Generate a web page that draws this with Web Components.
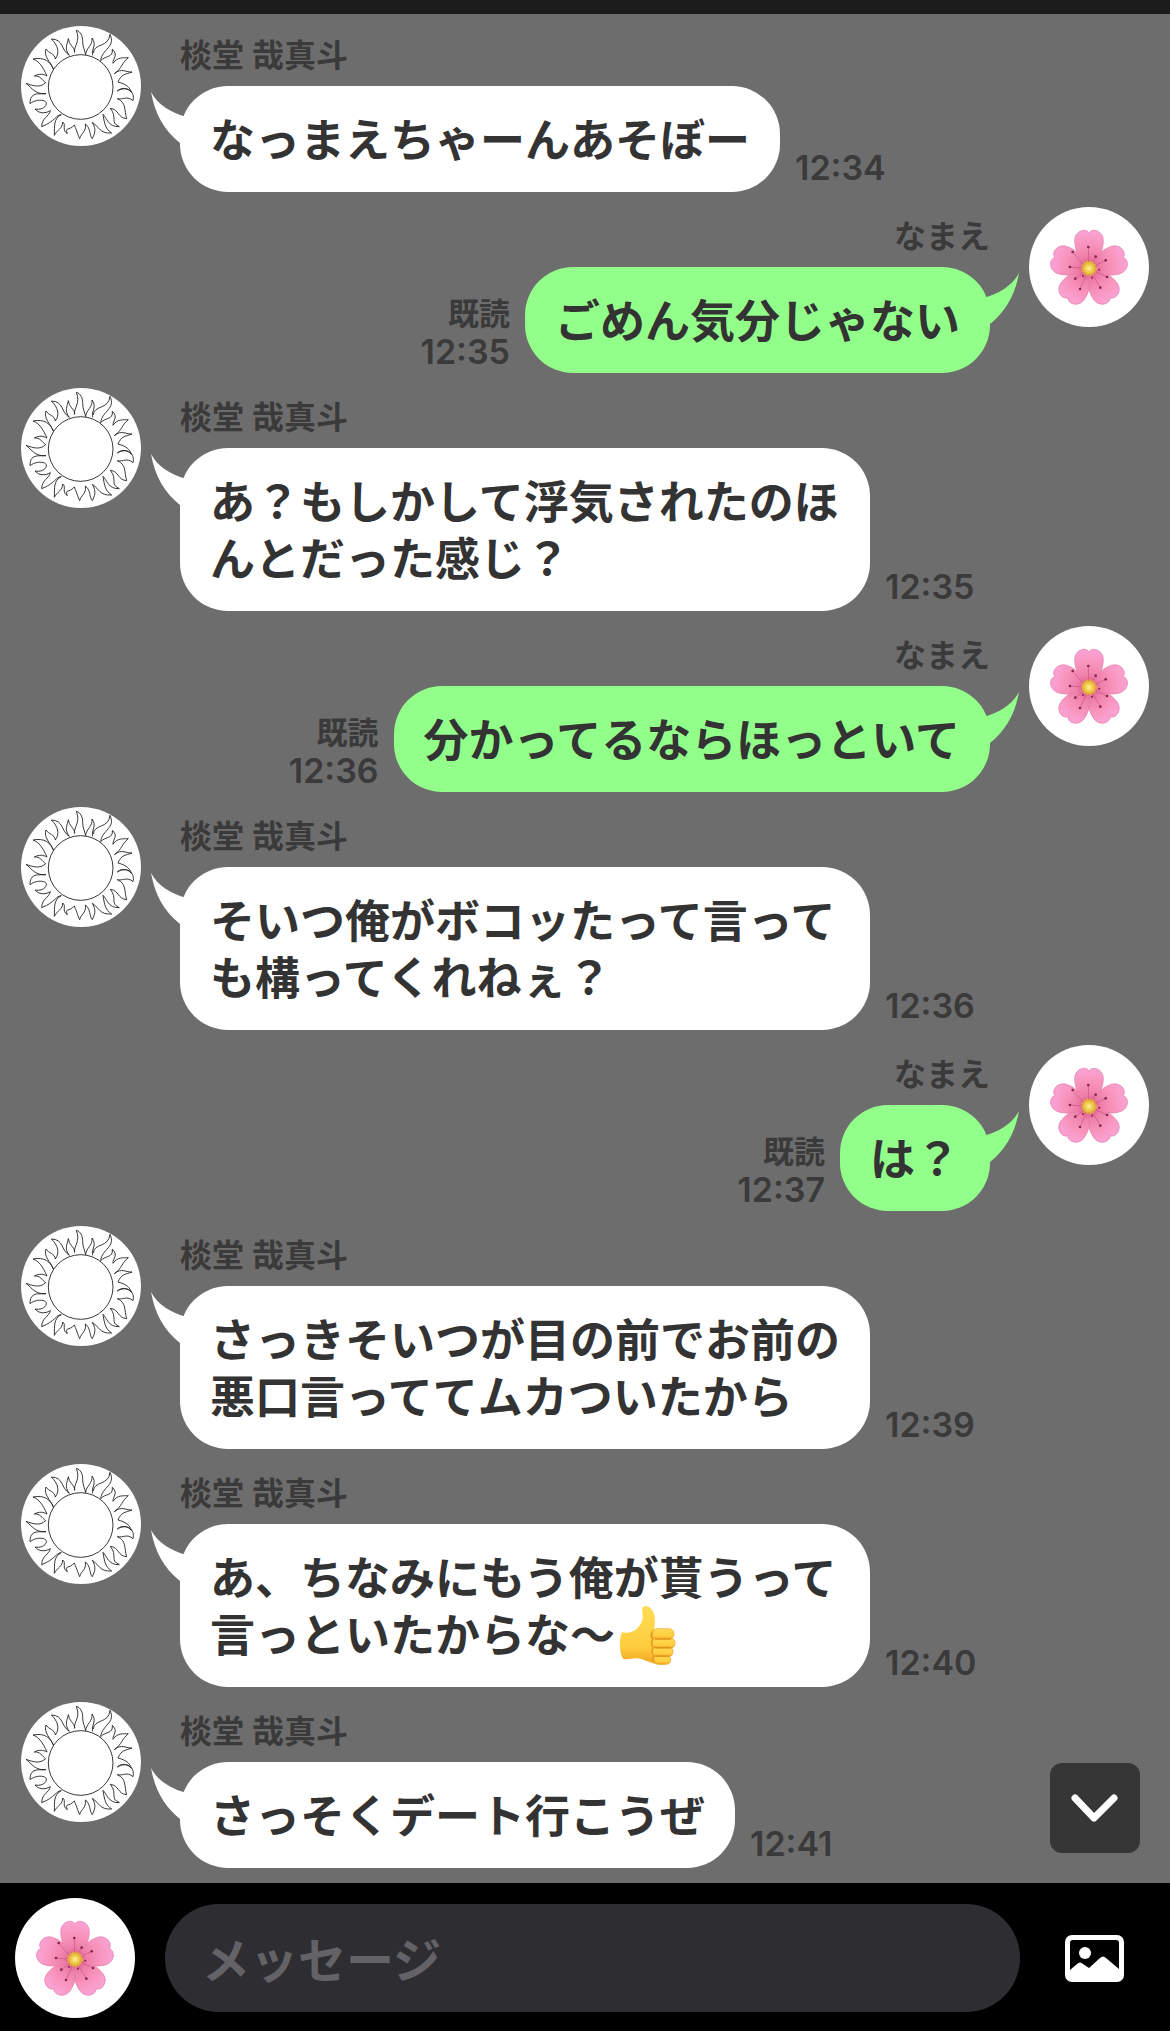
<!DOCTYPE html>
<html lang="ja">
<head>
<meta charset="utf-8">
<meta name="viewport" content="width=device-width, initial-scale=1">
<title>トーク</title>
<style>
  body {
    margin: 0;
    background: #000;
    color: #333;
    font-family: Inter, "Noto Sans CJK JP", sans-serif;
    font-weight: 600;
  }
</style>
</head>
<body>

<template id="sun-avatar">
  <style>
    :host {
      display: block;
      flex: none;
      width: 120px;
      height: 120px;
      border-radius: 50%;
      background: #fff;
      overflow: hidden;
    }
    svg { display: block; width: 100%; height: 100%; }
  </style>
  <svg viewBox="33 18 360 360" fill="none" stroke="#222" stroke-width="2.7" stroke-linejoin="round" aria-hidden="true">
    <circle cx="212" cy="201" r="97"/>
    <!-- flames, clockwise from the top -->
    <path d="M193 98C192 76 212 64 199 31C212 34 219 50 218 65C218 80 224 90 227 104C228 84 249 76 246 54C262 74 243 88 248 106"/>
    <path d="M250 99C252 68 296 84 300 43C318 82 276 86 272 122C286 106 310 114 307 88C326 106 308 114 309 130C322 110 340 114 355 113C334 130 337 144 313 161C334 142 350 158 366 156C344 164 334 162 324 186"/>
    <path d="M324 186C348 192 360 202 364 217C350 198 328 206 322 213C350 196 376 214 369 242C350 226 342 240 322 236C350 248 342 270 350 296C322 294 328 268 301 265C324 294 298 306 328 320C294 322 290 292 279 283C284 314 286 326 305 339C268 342 266 318 247 307C260 330 254 340 247 356C238 348 242 322 226 312C230 336 212 340 209 356C204 346 202 336 193 315"/>
    <path d="M193 315C176 334 164 320 172 341C154 330 170 314 158 306C158 326 142 328 133 346C134 318 130 296 154 284C138 284 136 304 95 320C96 292 116 292 121 272C104 282 86 280 75 267C92 270 106 264 109 252C112 238 78 236 60 251C60 216 84 222 108 221C76 224 66 204 48 190C70 198 90 204 107 188C96 180 90 166 73 168C88 160 100 162 111 168C98 140 88 124 69 117C104 110 122 126 130 147C122 126 100 110 108 87C116 100 134 100 136 117C150 98 144 76 124 57C162 58 152 90 178 106C162 86 172 72 175 56C176 74 192 80 195 95"/>
  </svg>
</template>

<template id="flower-avatar">
  <style>
    :host {
      display: block;
      flex: none;
      width: 120px;
      height: 120px;
      border-radius: 50%;
      background: #fff;
      overflow: hidden;
    }
    svg { display: block; width: 100%; height: 100%; }
  </style>
  <svg viewBox="-180 -185 360 360" aria-hidden="true">
    <defs>
      <radialGradient id="pink" gradientUnits="userSpaceOnUse" cx="0" cy="0" r="122">
        <stop offset="0" stop-color="#d4467c"/>
        <stop offset=".3" stop-color="#ee7fa8"/>
        <stop offset=".6" stop-color="#f893bb"/>
        <stop offset="1" stop-color="#fba6da"/>
      </radialGradient>
      <radialGradient id="core">
        <stop offset="0" stop-color="#fff19a"/>
        <stop offset=".6" stop-color="#f2ce4c"/>
        <stop offset="1" stop-color="#d99a32"/>
      </radialGradient>
      <path id="petal" fill="url(#pink)" stroke="#e27bab" stroke-width="2" d="M0 -4C-24 -20 -43 -52 -43 -84C-43 -107 -22 -119 -8 -114Q-2 -112 0 -107Q2 -112 8 -114C22 -119 43 -107 43 -84C43 -52 24 -20 0 -4Z"/>
    </defs>
    <use href="#petal" transform="rotate(144)"/>
    <use href="#petal" transform="rotate(216)"/>
    <use href="#petal" transform="rotate(72)"/>
    <use href="#petal" transform="rotate(288)"/>
    <use href="#petal"/>
    <g fill="none" stroke="#c75383" stroke-width="2">
      <path d="M0 0L-2 -65M0 0Q-30 -22 -49 -50M0 0L20 -36M0 0L50 -25M0 0L-57 -5M0 0L54 25M0 0L-41 30M0 0L34 57M0 0L-27 61"/>
    </g>
    <g fill="#82264f">
      <circle cx="-2" cy="-65" r="4"/><circle cx="-49" cy="-50" r="4"/><circle cx="20" cy="-36" r="4"/>
      <circle cx="50" cy="-25" r="4"/><circle cx="-57" cy="-5" r="4"/><circle cx="31" cy="3" r="3"/>
      <circle cx="54" cy="25" r="4"/><circle cx="-41" cy="30" r="4"/><circle cx="34" cy="57" r="4"/>
      <circle cx="-27" cy="61" r="4"/><circle cx="-18" cy="22" r="3"/><circle cx="9" cy="27" r="3"/>
    </g>
    <circle cx="0" cy="-1" r="21" fill="url(#core)"/>
    <circle cx="0" cy="-1" r="21" fill="none" stroke="#e6b03c" stroke-width="5" stroke-dasharray="5 4"/>
    <circle cx="0" cy="-1" r="10" fill="none" stroke="#e3b23b" stroke-width="3" stroke-dasharray="3 4"/>
  </svg>
</template>

<template id="thumb-emoji">
  <style>
    :host { display: inline; }
    svg {
      width: 60px;
      height: 60px;
      margin: -8px 0 -8px -8px;
      vertical-align: -5px;
    }
  </style>
  <svg viewBox="54 43 180 180" role="img" aria-label="いいね">
    <defs>
      <linearGradient id="skin" x1="0" y1="0" x2="0" y2="1">
        <stop offset="0" stop-color="#ffdc55"/>
        <stop offset=".7" stop-color="#ffcd3d"/>
        <stop offset="1" stop-color="#efa420"/>
      </linearGradient>
    </defs>
    <path fill="url(#skin)" d="M69 125C84 128 96 125 105 120C119 112 127 98 131 84C133 75 128 62 130 53C133 43 145 44 154 52C168 65 170 85 166 115L200 150L206 219C190 223 174 221 158 216C140 212 131 203 112 203C97 202 88 208 73 205C60 190 60 142 69 125Z"/>
    <path fill="none" stroke="#e79a20" stroke-width="5" d="M162 120C154 132 156 140 162 144C156 154 158 164 163 170C158 180 160 190 166 195C160 204 162 212 170 217"/>
    <g fill="url(#skin)" stroke="#e9a126" stroke-width="2">
      <rect x="165" y="193" width="50" height="28" rx="13"/>
      <rect x="161" y="168" width="61" height="30" rx="14"/>
      <rect x="160" y="142" width="68" height="31" rx="14"/>
      <rect x="160" y="114" width="65" height="32" rx="15"/>
    </g>
    <path fill="none" stroke="#d98b1c" stroke-width="3" d="M168 145H216M168 171H216M170 196H210"/>
  </svg>
</template>

<template id="chat-message">
  <style>
    :host {
      display: flex;
      gap: 39px;
      align-items: flex-start;
      padding: 0 21px;
    }
    .body {
      display: flex;
      flex-direction: column;
      align-items: flex-start;
      min-width: 0;
    }
    .name {
      height: 60px;
      font-size: 32px;
      line-height: 60px;
      color: #3a3a3a;
    }
    .line {
      display: flex;
      align-items: flex-end;
      gap: 15px;
    }
    .bubble {
      position: relative;
      box-sizing: border-box;
      max-width: calc(14em + 60px);
      padding: 23px 30px 26px;
      border-radius: 48px;
      background: var(--bubble, #fff);
      font-family: "Noto Sans CJK JP", sans-serif;
      font-size: 45px;
      line-height: 57px;
    }
    .tail {
      position: absolute;
      top: 5px;
      left: -30px;
      width: 36px;
      height: 54px;
      fill: var(--bubble, #fff);
    }
    .meta {
      padding-bottom: 5px;
      font-size: 34px;
      line-height: 38px;
      color: #3a3a3a;
    }
    .read { display: none; font-size: 31px; }

    :host([mine]) { --bubble: #93ff8b; }
    :host([mine]), :host([mine]) .line { flex-direction: row-reverse; }
    :host([mine]) .body { align-items: flex-end; }
    :host([mine]) .meta { padding-bottom: 2px; text-align: right; }
    :host([mine]) .read { display: block; }
    :host([mine]) .tail { left: auto; right: -30px; transform: scaleX(-1); }
  </style>
  <slot name="avatar"></slot>
  <div class="body">
    <div class="name"></div>
    <div class="line">
      <div class="bubble">
        <svg class="tail" viewBox="0 0 36 54" aria-hidden="true"><path d="M1 1C8 14 20 21 36 26V54L30 52C14 39 5 23 1 1Z"/></svg>
        <slot></slot>
      </div>
      <div class="meta"><span class="read">既読</span><time></time></div>
    </div>
  </div>
</template>

<template id="chat-log">
  <style>
    :host {
      position: relative;
      display: flex;
      flex-direction: column;
      flex: 1;
      gap: 15px;
      padding: 12px 0 15px;
      background: #6d6d6d;
    }
    button {
      position: absolute;
      right: 30px;
      bottom: 30px;
      width: 90px;
      height: 90px;
      padding: 0;
      border: 0;
      border-radius: 12px;
      background: #363636;
    }
    svg { display: block; }
  </style>
  <slot></slot>
  <button type="button" aria-label="最新のメッセージへ">
    <svg width="90" height="90" viewBox="0 0 90 90" fill="none" stroke="#fff" stroke-width="7" stroke-linecap="round" stroke-linejoin="round"><path d="M25 35L44 55L64 35"/></svg>
  </button>
</template>

<template id="chat-composer">
  <style>
    :host {
      display: flex;
      align-items: center;
      gap: 30px;
      padding: 15px 31px 13px 15px;
      background: #000;
    }
    input {
      flex: 1;
      min-width: 0;
      box-sizing: border-box;
      height: 108px;
      padding: 0 37px 3px;
      border: 0;
      border-radius: 54px;
      background: #2e2d32;
      color: #fff;
      font: 600 48px "Noto Sans CJK JP", sans-serif;
    }
    input::placeholder { color: #636267; opacity: 1; }
    button {
      width: 89px;
      height: 90px;
      padding: 0;
      border: 0;
      background: none;
    }
    svg { display: block; margin: auto; }
  </style>
  <slot></slot>
  <input type="text" placeholder="メッセージ" aria-label="メッセージ">
  <button type="button" aria-label="画像を送る">
    <svg width="59" height="47" viewBox="0 0 59 47">
      <rect width="59" height="47" rx="7" fill="#fff"/>
      <path fill="#000" d="M8 5H51Q54 5 54 8V34L41 23Q38 20 35 23L24 33L18 29Q15 26 12 29L5 35V8Q5 5 8 5Z"/>
      <circle cx="20" cy="18" r="6" fill="#fff"/>
    </svg>
  </button>
</template>

<template id="chat-app">
  <style>
    :host {
      display: flex;
      flex-direction: column;
      min-height: 100vh;
    }
    .top { height: 14px; background: #1c1c1c; }
  </style>
  <div class="top"></div>
  <slot></slot>
</template>

<script>
  class TemplateElement extends HTMLElement {
    constructor() {
      super();
      this.attachShadow({mode: "open"});
      const template = document.getElementById(this.localName).content;
      this.shadowRoot.appendChild(template.cloneNode(true));
    }
  }

  class SunAvatar extends TemplateElement {}
  class FlowerAvatar extends TemplateElement {}
  class ThumbEmoji extends TemplateElement {}
  class ChatLog extends TemplateElement {}
  class ChatComposer extends TemplateElement {}
  class ChatApp extends TemplateElement {}

  class ChatMessage extends TemplateElement {
    connectedCallback() {
      this.shadowRoot.querySelector(".name").textContent = this.getAttribute("name");
      this.shadowRoot.querySelector("time").textContent = this.getAttribute("time");
    }
  }

  customElements.define("sun-avatar", SunAvatar);
  customElements.define("flower-avatar", FlowerAvatar);
  customElements.define("thumb-emoji", ThumbEmoji);
  customElements.define("chat-message", ChatMessage);
  customElements.define("chat-log", ChatLog);
  customElements.define("chat-composer", ChatComposer);
  customElements.define("chat-app", ChatApp);
</script>

<chat-app>
  <chat-log>
    <chat-message name="棪堂 哉真斗" time="12:34"><sun-avatar slot="avatar"></sun-avatar>なっまえちゃーんあそぼー</chat-message>
    <chat-message mine name="なまえ" time="12:35"><flower-avatar slot="avatar"></flower-avatar>ごめん気分じゃない</chat-message>
    <chat-message name="棪堂 哉真斗" time="12:35"><sun-avatar slot="avatar"></sun-avatar>あ？もしかして浮気されたのほんとだった感じ？</chat-message>
    <chat-message mine name="なまえ" time="12:36"><flower-avatar slot="avatar"></flower-avatar>分かってるならほっといて</chat-message>
    <chat-message name="棪堂 哉真斗" time="12:36"><sun-avatar slot="avatar"></sun-avatar>そいつ俺がボコッたって言っても構ってくれねぇ？</chat-message>
    <chat-message mine name="なまえ" time="12:37"><flower-avatar slot="avatar"></flower-avatar>は？</chat-message>
    <chat-message name="棪堂 哉真斗" time="12:39"><sun-avatar slot="avatar"></sun-avatar>さっきそいつが目の前でお前の悪口言っててムカついたから</chat-message>
    <chat-message name="棪堂 哉真斗" time="12:40"><sun-avatar slot="avatar"></sun-avatar>あ、ちなみにもう俺が貰うって言っといたからな〜<thumb-emoji></thumb-emoji></chat-message>
    <chat-message name="棪堂 哉真斗" time="12:41"><sun-avatar slot="avatar"></sun-avatar>さっそくデート行こうぜ</chat-message>
  </chat-log>
  <chat-composer><flower-avatar></flower-avatar></chat-composer>
</chat-app>

</body>
</html>
